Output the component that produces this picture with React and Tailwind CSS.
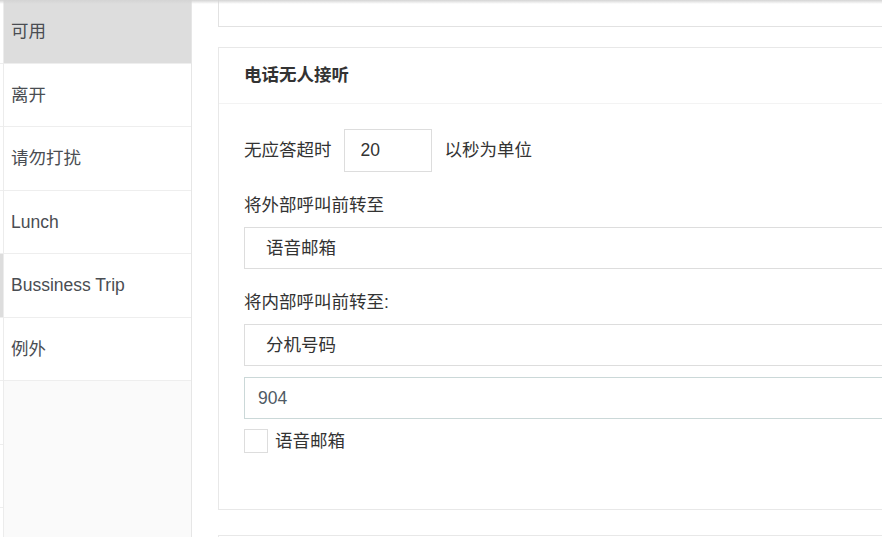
import { useState } from 'react'

function App() {
  const [active] = useState(0)
  const [vm, setVm] = useState(false)

  const states = ['可用', '离开', '请勿打扰', 'Lunch', 'Bussiness Trip', '例外']

  return (
    <div className="relative flex h-[537px] w-[882px] overflow-hidden bg-white text-[17.5px] text-[#333] font-['Liberation_Sans','Noto_Sans_CJK_SC',sans-serif]">
      {/* top shadow from header above */}
      <div className="pointer-events-none absolute left-0 right-0 top-0 h-[4px] bg-gradient-to-b from-[#d4d4d4] to-transparent"></div>

      {/* thin left strip */}
      <div className="flex w-[4px] shrink-0 flex-col border-r border-[#ececec]">
        {states.map((s, i) => (
          <div key={i} className={`h-[63.5px] shrink-0 border-b border-[#eeeeee] ${i === 4 ? 'bg-[#dddddd]' : 'bg-white'}`}></div>
        ))}
        <div className="h-[63.5px] shrink-0 border-b border-[#eeeeee]"></div>
        <div className="h-[63.5px] shrink-0 border-b border-[#eeeeee]"></div>
      </div>

      {/* Status list */}
      <div className="flex w-[188px] shrink-0 flex-col border-r border-[#e6e6e6] bg-[#fafafa]">
        {states.map((s, i) => (
          <div
            key={i}
            className={`flex h-[63.5px] shrink-0 items-center border-b border-[#eeeeee] pl-[7px] text-[#4a4d52] ${active === i ? 'bg-[#dddddd]' : 'bg-white'}`}
          >
            {s}
          </div>
        ))}
      </div>

      {/* Main content */}
      <div className="ml-[26px] flex w-[720px] shrink-0 flex-col">
        <div className="h-[27px] shrink-0 border border-t-0 border-[#e2e2e2]"></div>

        <div className="mt-[20px] h-[463px] shrink-0 border border-[#e8e8e8]">
          <div className="flex h-[56px] items-center border-b border-[#f3f3f3] pl-[25px] font-bold text-[#333]">
            电话无人接听
          </div>

          <div className="pl-[25px] pt-[25px]">
            <div className="flex h-[43px] items-center">
              <span>无应答超时</span>
              <input
                defaultValue="20"
                className="ml-[12px] h-[43px] w-[88px] border border-[#dddddd] pl-[16px] text-[17.5px] text-[#333] outline-none"
              />
              <span className="ml-[13px]">以秒为单位</span>
            </div>

            <div className="mt-[21px] leading-[24px]">将外部呼叫前转至</div>
            <div className="mt-[10px] flex h-[42px] items-center border border-[#dddddd] pl-[21px]">语音邮箱</div>

            <div className="mt-[21px] leading-[24px]">将内部呼叫前转至:</div>
            <div className="mt-[10px] flex h-[42px] items-center border border-[#dddddd] pl-[21px]">分机号码</div>

            <input
              defaultValue="904"
              className="mt-[11px] block h-[42px] w-full border border-[#cbd8d8] pl-[13px] text-[17.5px] text-[#4f5a64] outline-none"
            />

            <label className="mt-[10px] flex h-[24px] cursor-pointer items-center">
              <span
                onClick={() => setVm(!vm)}
                className="h-[24px] w-[24px] border border-[#dddddd] bg-white"
              ></span>
              <span className="ml-[7px]">语音邮箱</span>
            </label>
          </div>
        </div>

        <div className="mt-[25px] h-[60px] shrink-0 border border-[#e8e8e8]"></div>
      </div>
    </div>
  )
}

export default App
